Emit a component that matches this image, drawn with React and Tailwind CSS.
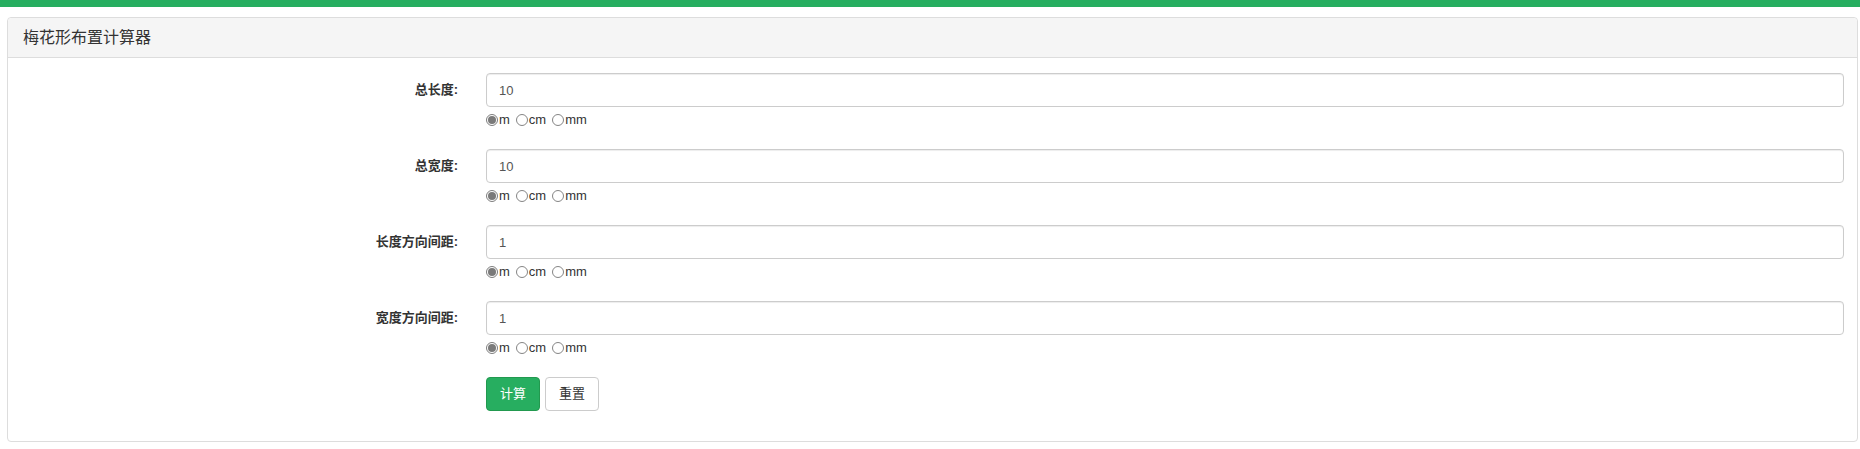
import React, { useState } from 'react';

const fields = [
    { key: 'len', label: '总长度:', value: '10' },
    { key: 'wid', label: '总宽度:', value: '10' },
    { key: 'lenGap', label: '长度方向间距:', value: '1' },
    { key: 'widGap', label: '宽度方向间距:', value: '1' },
];

const units = ['m', 'cm', 'mm'];

function Radio({ checked, text, first, onClick }) {
    return (
        <label onClick={onClick} className={`inline-flex items-center cursor-pointer ${first ? '' : 'ml-[6px]'}`}>
            <span className={`w-[12px] h-[12px] rounded-full border flex items-center justify-center bg-white ${checked ? 'border-[#7d7d7d]' : 'border-[#858585]'}`}>
                {checked && <span className="w-[8px] h-[8px] rounded-full bg-[#7a7a7a]"></span>}
            </span>
            <span className="ml-[1px]">{text}</span>
        </label>
    );
}

function FieldRow({ label, value }) {
    const [unit, setUnit] = useState('m');
    return (
        <div className="flex mb-[19px]">
            <div className="w-[478px] shrink-0 h-[34px] flex items-center justify-end pr-[28px] text-[13px] font-bold text-[#333]">
                {label}
            </div>
            <div className="flex-1">
                <input
                    defaultValue={value}
                    className="w-full h-[34px] border border-[#ccc] rounded-[4px] px-[12px] text-[13px] text-[#555] outline-none shadow-[inset_0_1px_1px_rgba(0,0,0,0.075)]"
                />
                <div className="h-[20px] mt-[3px] flex items-center text-[13px] text-[#333]">
                    {units.map((u, i) => (
                        <Radio key={u} text={u} first={i === 0} checked={unit === u} onClick={() => setUnit(u)} />
                    ))}
                </div>
            </div>
        </div>
    );
}

export default function App() {
    return (
        <div className="min-h-screen bg-white font-['Liberation_Sans','Noto_Sans_CJK_SC',sans-serif]">
            <div className="h-[7px] bg-[#27ae60]"></div>
            <div className="pl-[7px] pr-[2px] pt-[10px]">
                <div className="border border-[#ddd] rounded-[4px] bg-white">
                    {/* 标题 */}
                    <div className="h-[40px] bg-[#f5f5f5] border-b border-[#ddd] rounded-t-[4px] px-[15px] flex items-center text-[16px] text-[#333]">
                        梅花形布置计算器
                    </div>
                    <div className="pt-[15px] pb-[30px] pr-[13px]">
                        {fields.map((f) => (
                            <FieldRow key={f.key} label={f.label} value={f.value} />
                        ))}
                        <div className="flex">
                            <div className="w-[478px] shrink-0"></div>
                            <div className="flex gap-[5px]">
                                <button className="h-[34px] px-[13px] rounded-[4px] border border-[#22994f] bg-[#27ae60] text-white text-[13px]">
                                    计算
                                </button>
                                <button className="h-[34px] px-[13px] rounded-[4px] border border-[#ccc] bg-white text-[#333] text-[13px]">
                                    重置
                                </button>
                            </div>
                        </div>
                    </div>
                </div>
            </div>
        </div>
    );
}
